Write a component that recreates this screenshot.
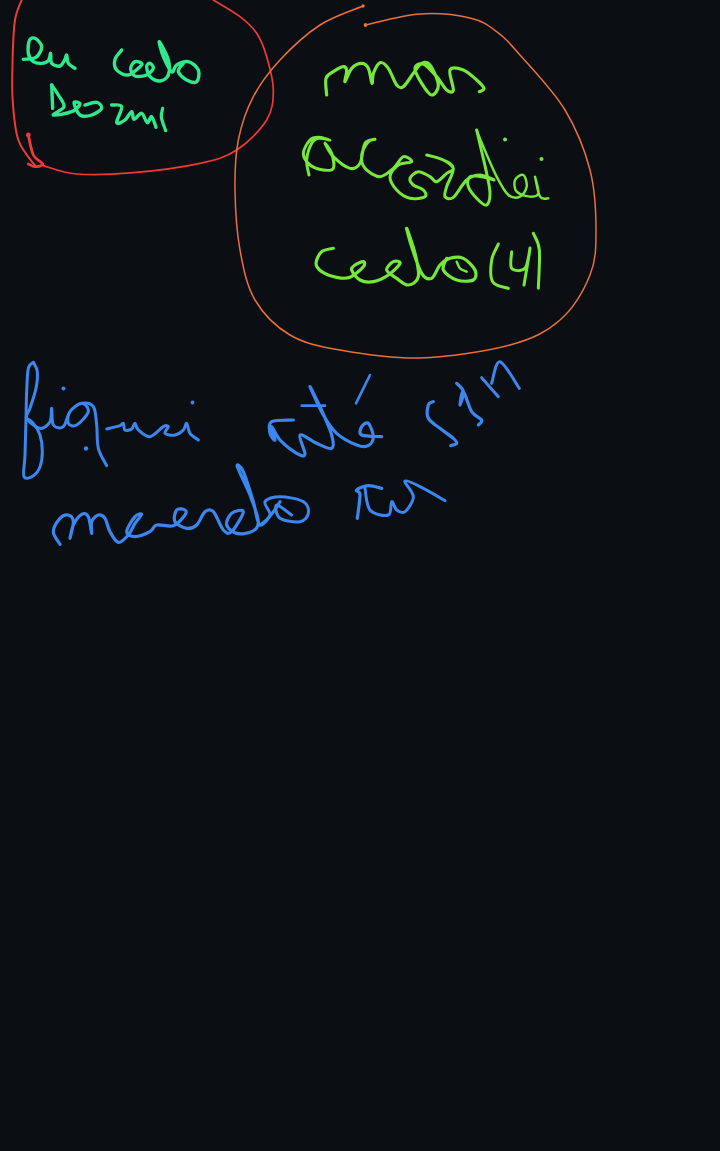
const smooth = (raw, ox, oy) => {
  const p = [];
  for (let i = 0; i < raw.length; i += 2) p.push([ox + raw[i] / 3, oy + raw[i + 1] / 3]);
  let d = `M${p[0][0]} ${p[0][1]}`;
  for (let i = 0; i < p.length - 1; i++) {
    const a = p[i - 1] || p[i];
    const b = p[i];
    const c = p[i + 1];
    const e = p[i + 2] || c;
    d += `C${b[0] + (c[0] - a[0]) / 6} ${b[1] + (c[1] - a[1]) / 6} ${c[0] - (e[0] - b[0]) / 6} ${c[1] - (e[1] - b[1]) / 6} ${c[0]} ${c[1]}`;
  }
  return d;
};

const RED = "#ef3b36";
const ORANGE = "#e9713c";
const MINT = "#2ee98e";
const LIME = "#76e83c";
const BLUE = "#3b87ee";

const strokes = [
  // red circle
  { c: RED, w: 1.7, o: [0, 0], p: [640,0, 720,50, 770,100, 800,170, 820,270, 800,360, 710,450, 600,490, 400,518, 230,522, 130,497] },
  { c: RED, w: 2, o: [0, 0], p: [65,0, 45,60, 38,170, 38,300, 55,420, 105,497] },
  { c: RED, w: 2.8, o: [0, 0], p: [85,405, 100,465, 128,492, 105,500, 85,492] },
  // orange circle
  { c: ORANGE, w: 1.5, o: [0, 0], p: [1095,75, 1260,42, 1410,54, 1490,95, 1560,165, 1695,330, 1770,510, 1788,690, 1770,825, 1680,960, 1530,1035, 1260,1074, 1020,1050, 870,1005, 765,900, 720,750, 705,570, 715,420, 760,290, 840,180, 960,75, 1089,18] },
  // eu cecho
  { c: MINT, w: 3.4, o: [0, 0], p: [70,178, 108,172, 125,140, 105,115, 88,122, 85,160, 100,185, 125,190, 145,182, 152,160, 155,190, 180,198, 195,178, 200,165, 205,190, 225,205] },
  { c: MINT, w: 3.4, o: [0, 0], p: [365,150, 345,178, 350,210, 385,225, 420,200, 425,190, 405,185, 392,205, 405,228, 440,225, 460,205, 450,190, 440,200, 450,230, 480,243, 505,225, 505,180, 478,125, 490,170, 515,215, 530,195, 565,185, 595,210, 590,245, 560,240, 535,215, 550,190] },
  // deormi
  { c: MINT, w: 3.4, o: [0, 0], p: [155,255, 158,325] },
  { c: MINT, w: 3.4, o: [0, 0], p: [155,255, 175,285, 192,320, 160,345, 215,335, 240,312, 222,308, 240,345, 275,345, 305,325, 290,307, 255,315] },
  { c: MINT, w: 3.4, o: [0, 0], p: [335,315, 365,320, 350,368, 375,360, 395,335, 402,358, 425,340, 442,368, 455,350, 468,382] },
  { c: MINT, w: 3.2, o: [0, 0], p: [488,325, 484,352, 497,392] },
  // mnas
  { c: LIME, w: 3.2, o: [290, 40], p: [110,165, 108,115, 130,95, 160,80, 170,92, 165,125, 185,85, 215,70, 235,85, 246,130, 250,100, 270,68, 295,85, 320,135, 340,140, 370,100, 395,70, 420,75, 445,135, 425,165, 395,130, 375,85, 400,72, 440,110, 470,150, 490,150, 480,90, 520,90, 560,120, 582,145, 568,155] },
  // recordei
  { c: LIME, w: 3, o: [290, 40], p: [57,405, 50,360, 65,310, 85,295, 120,300, 85,292, 60,300, 40,340, 60,375, 100,390, 130,385, 125,340, 105,310, 130,350, 180,385, 210,370, 225,310, 255,298, 235,305, 215,345, 225,385, 270,410, 310,385, 340,350, 365,365, 325,375, 300,410, 320,450, 360,475, 405,470, 400,450, 370,435, 360,415, 385,395, 420,410, 440,425, 470,400, 490,385, 460,360, 410,345, 460,360, 490,385, 470,440, 465,470, 490,472, 530,420, 570,405, 612,420, 575,410, 540,410, 535,440, 565,480, 590,495, 600,460, 590,400, 560,270] },
  { c: LIME, w: 2.4, o: [290, 40], p: [560,270, 580,320, 620,410, 655,465, 690,470, 710,440, 700,405, 675,420, 680,455, 720,470, 745,460, 735,410, 750,470, 775,475] },
  // cecho (4)
  { c: LIME, w: 3.2, o: [300, 220], p: [100,85, 65,95, 48,130, 65,155, 110,172, 150,172, 190,140, 190,125, 165,135, 155,150, 180,180, 220,185, 265,165, 300,130, 280,125, 260,150, 290,175, 325,195, 355,170, 345,100, 320,25, 335,80, 365,160, 395,175, 420,135, 450,115, 490,115, 525,150, 520,180, 470,180, 430,150, 440,115] },
  { c: LIME, w: 2.4, o: [300, 220], p: [470,125, 480,145, 500,155] },
  { c: LIME, w: 3, o: [300, 220], p: [595,72, 575,120, 578,185, 625,205] },
  { c: LIME, w: 3, o: [300, 220], p: [635,95, 635,145, 675,145, 690,85, 672,195] },
  { c: LIME, w: 3, o: [300, 220], p: [700,40, 718,90, 715,205] },
  // fiquei
  { c: BLUE, w: 3, o: [10, 355], p: [70,22, 55,40, 50,110, 48,190, 45,300, 42,365, 70,362, 90,335, 97,290, 90,240, 70,205, 50,190] },
  { c: BLUE, w: 3, o: [10, 355], p: [70,22, 82,50, 78,100, 60,160, 50,190, 90,220, 120,200, 125,160, 130,210, 160,215, 180,170, 215,145, 235,170, 200,210, 175,205, 180,170, 215,145, 250,155, 260,210, 265,280, 290,332] },
  { c: BLUE, w: 3, o: [10, 355], p: [290,222, 330,212, 340,205, 345,225, 365,222, 375,205, 385,225, 420,245, 460,215, 475,215, 465,235, 495,240, 520,225, 530,205, 540,235, 565,255] },
  // mexendo
  { c: BLUE, w: 3.2, o: [10, 355], p: [150,568, 130,530, 150,490, 175,480, 190,500, 180,550, 190,510, 215,478, 235,485, 245,535, 245,500, 265,480, 285,490, 300,530, 325,562, 355,540, 375,505, 395,478, 375,485, 350,530, 375,545, 420,530, 440,510, 490,512, 525,480, 525,465, 500,465, 495,500, 530,520, 560,510, 585,470, 610,470, 640,525, 665,530, 700,470, 665,475, 650,510, 680,535, 725,530, 745,500, 720,420, 682,335, 700,350, 730,440, 750,510, 790,470, 810,440] },
  { c: BLUE, w: 3, o: [260, 355], p: [0,510, 30,480, 15,440, 60,425, 130,440, 145,475, 120,500, 60,490, 50,450, 95,480] },
  // até
  { c: BLUE, w: 3.2, o: [260, 355], p: [100,195, 35,200, 30,235, 45,255, 35,215, 60,255, 110,295, 135,298, 120,240, 170,265, 215,280, 215,240, 180,155, 150,95, 190,180, 230,235, 290,270, 325,272, 340,245, 325,205, 305,215, 305,240, 365,245] },
  { c: BLUE, w: 2.6, o: [260, 355], p: [125,152, 195,152] },
  { c: BLUE, w: 2.6, o: [260, 355], p: [330,60, 288,145] },
  // sim
  { c: BLUE, w: 3.2, o: [260, 355], p: [520,140, 505,150, 505,190, 540,220, 580,250, 590,265, 572,272] },
  { c: BLUE, w: 3.2, o: [260, 355], p: [590,85, 610,110, 600,150, 610,110, 635,170, 665,195, 655,210] },
  { c: BLUE, w: 3, o: [260, 355], p: [665,68, 715,125] },
  { c: BLUE, w: 3, o: [260, 355], p: [695,85, 720,20, 778,100] },
  // ma
  { c: BLUE, w: 3.2, o: [260, 355], p: [292,490, 300,420, 290,405, 325,392, 365,400] },
  { c: BLUE, w: 3, o: [260, 355], p: [315,400, 330,465, 385,480, 395,440, 410,465, 435,470, 460,425, 435,378, 490,400, 555,437] },
];

const dots = [
  { c: RED, x: 28.3, y: 135, r: 2.4 },
  { c: ORANGE, x: 365.5, y: 25, r: 1.9 },
  { c: ORANGE, x: 363, y: 6, r: 1.7 },
  { c: LIME, x: 505, y: 139.5, r: 2 },
  { c: LIME, x: 541.5, y: 159, r: 2 },
  { c: BLUE, x: 63.5, y: 388.5, r: 2 },
  { c: BLUE, x: 86, y: 448.5, r: 2.2 },
  { c: BLUE, x: 192.5, y: 402.5, r: 1.9 },
];

export default function App() {
  return (
    <div className="w-[720px] h-[1151px] bg-[#0b0e13] overflow-hidden">
      <svg className="block" width="720" height="1151" viewBox="0 0 720 1151" fill="none" strokeLinecap="round" strokeLinejoin="round">
        {strokes.map((s, i) => (
          <path key={i} d={smooth(s.p, s.o[0], s.o[1])} stroke={s.c} strokeWidth={s.w} />
        ))}
        {dots.map((d, i) => (
          <circle key={i} cx={d.x} cy={d.y} r={d.r} fill={d.c} />
        ))}
      </svg>
    </div>
  );
}
